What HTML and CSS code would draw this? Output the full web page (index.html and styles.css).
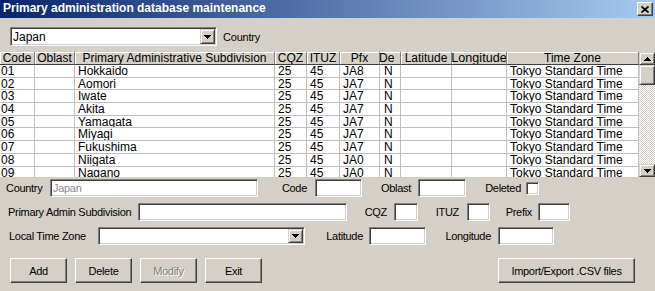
FILE: index.html
```html
<!DOCTYPE html>
<html lang="en">
<head>
    <meta charset="UTF-8">
    <title>Primary administration database maintenance</title>
    <link rel="stylesheet" href="styles.css">
</head>
<body>
    <div class="window">
        <div class="titlebar">
            <span class="title">Primary administration database maintenance</span>
            <span class="close-btn">
                <svg width="8" height="7" viewBox="0 0 8 7"><path d="M0.5 0.5l7 6M7.5 0.5l-7 6" stroke="#000" stroke-width="1.7"/></svg>
            </span>
        </div>

        <div class="country-bar">
            <div class="combo country-combo">
                <span class="combo-text">Japan</span>
                <span class="drop-btn">
                    <svg width="7" height="4" viewBox="0 0 7 4"><path d="M0 0h7v1h-1v1h-1v1h-1v1h-1v-1h-1v-1h-1v-1h-1z"/></svg>
                </span>
            </div>
            <span class="combo-label">Country</span>
        </div>

        <div class="grid-wrap">
            <div class="grid">
                <div class="grid-row grid-head">
                    <div class="hcell">Code</div>
                    <div class="hcell">Oblast</div>
                    <div class="hcell">Primary Administrative Subdivision</div>
                    <div class="hcell">CQZ</div>
                    <div class="hcell">ITUZ</div>
                    <div class="hcell">Pfx</div>
                    <div class="hcell hcell-del">De</div>
                    <div class="hcell">Latitude</div>
                    <div class="hcell hcell-lon">Longitude</div>
                    <div class="hcell">Time Zone</div>
                </div>
                <div class="grid-row">
                    <div class="cell code">01</div><div class="cell"></div><div class="cell">Hokkaido</div><div class="cell">25</div><div class="cell">45</div><div class="cell">JA8</div><div class="cell del">N</div><div class="cell"></div><div class="cell"></div><div class="cell">Tokyo Standard Time</div>
                </div>
                <div class="grid-row">
                    <div class="cell code">02</div><div class="cell"></div><div class="cell">Aomori</div><div class="cell">25</div><div class="cell">45</div><div class="cell">JA7</div><div class="cell del">N</div><div class="cell"></div><div class="cell"></div><div class="cell">Tokyo Standard Time</div>
                </div>
                <div class="grid-row">
                    <div class="cell code">03</div><div class="cell"></div><div class="cell">Iwate</div><div class="cell">25</div><div class="cell">45</div><div class="cell">JA7</div><div class="cell del">N</div><div class="cell"></div><div class="cell"></div><div class="cell">Tokyo Standard Time</div>
                </div>
                <div class="grid-row">
                    <div class="cell code">04</div><div class="cell"></div><div class="cell">Akita</div><div class="cell">25</div><div class="cell">45</div><div class="cell">JA7</div><div class="cell del">N</div><div class="cell"></div><div class="cell"></div><div class="cell">Tokyo Standard Time</div>
                </div>
                <div class="grid-row">
                    <div class="cell code">05</div><div class="cell"></div><div class="cell">Yamagata</div><div class="cell">25</div><div class="cell">45</div><div class="cell">JA7</div><div class="cell del">N</div><div class="cell"></div><div class="cell"></div><div class="cell">Tokyo Standard Time</div>
                </div>
                <div class="grid-row">
                    <div class="cell code">06</div><div class="cell"></div><div class="cell">Miyagi</div><div class="cell">25</div><div class="cell">45</div><div class="cell">JA7</div><div class="cell del">N</div><div class="cell"></div><div class="cell"></div><div class="cell">Tokyo Standard Time</div>
                </div>
                <div class="grid-row">
                    <div class="cell code">07</div><div class="cell"></div><div class="cell">Fukushima</div><div class="cell">25</div><div class="cell">45</div><div class="cell">JA7</div><div class="cell del">N</div><div class="cell"></div><div class="cell"></div><div class="cell">Tokyo Standard Time</div>
                </div>
                <div class="grid-row">
                    <div class="cell code">08</div><div class="cell"></div><div class="cell">Niigata</div><div class="cell">25</div><div class="cell">45</div><div class="cell">JA0</div><div class="cell del">N</div><div class="cell"></div><div class="cell"></div><div class="cell">Tokyo Standard Time</div>
                </div>
                <div class="grid-row">
                    <div class="cell code">09</div><div class="cell"></div><div class="cell">Nagano</div><div class="cell">25</div><div class="cell">45</div><div class="cell">JA0</div><div class="cell del">N</div><div class="cell"></div><div class="cell"></div><div class="cell">Tokyo Standard Time</div>
                </div>
            </div>

            <div class="vscroll">
                <span class="sb-btn">
                    <svg width="7" height="4" viewBox="0 0 7 4"><path d="M3 0h1v1h1v1h1v1h1v1h-7v-1h1v-1h1v-1h1z"/></svg>
                </span>
                <span class="sb-thumb"></span>
                <span class="sb-track"></span>
                <span class="sb-btn">
                    <svg width="7" height="4" viewBox="0 0 7 4"><path d="M0 0h7v1h-1v1h-1v1h-1v1h-1v-1h-1v-1h-1v-1h-1z"/></svg>
                </span>
            </div>
        </div>

        <div class="form">
            <div class="form-row row-1">
                <label class="lbl lbl-country">Country</label>
                <span class="field f-country">Japan</span>
                <label class="lbl lbl-code">Code</label>
                <span class="field f-code"></span>
                <label class="lbl lbl-oblast">Oblast</label>
                <span class="field f-oblast"></span>
                <label class="lbl lbl-deleted">Deleted</label>
                <span class="checkbox"></span>
            </div>

            <div class="form-row row-2">
                <label class="lbl lbl-pas">Primary Admin Subdivision</label>
                <span class="field f-pas"></span>
                <label class="lbl lbl-cqz">CQZ</label>
                <span class="field f-cqz"></span>
                <label class="lbl lbl-ituz">ITUZ</label>
                <span class="field f-ituz"></span>
                <label class="lbl lbl-prefix">Prefix</label>
                <span class="field f-prefix"></span>
            </div>

            <div class="form-row row-3">
                <label class="lbl lbl-tz">Local Time Zone</label>
                <div class="combo tz-combo">
                    <span class="combo-text"></span>
                    <span class="drop-btn">
                        <svg width="7" height="4" viewBox="0 0 7 4"><path d="M0 0h7v1h-1v1h-1v1h-1v1h-1v-1h-1v-1h-1v-1h-1z"/></svg>
                    </span>
                </div>
                <label class="lbl lbl-lat">Latitude</label>
                <span class="field f-lat"></span>
                <label class="lbl lbl-lon">Longitude</label>
                <span class="field f-lon"></span>
            </div>

            <div class="button-row">
                <button class="btn">Add</button>
                <button class="btn">Delete</button>
                <button class="btn btn-disabled">Modify</button>
                <button class="btn">Exit</button>
                <button class="btn btn-csv">Import/Export .CSV files</button>
            </div>
        </div>
    </div>
</body>
</html>
```

FILE: styles.css
```css
:root {
    --face: #d4d0c8;
    --shadow: #808080;
    --dark: #404040;
}

* {
    box-sizing: border-box;
    margin: 0;
    padding: 0;
}

body {
    background: var(--face);
    font-family: 'Liberation Sans', Arial, sans-serif;
    width: 655px;
    height: 291px;
    overflow: hidden;
}

.window {
    width: 655px;
    height: 291px;
}

/* title bar */
.titlebar {
    height: 18px;
    background: linear-gradient(to right, #0a246a, #a6caf0);
    display: flex;
    align-items: flex-start;
    justify-content: space-between;
    padding: 0 2px 0 3px;
}

.title {
    color: #fff;
    font-weight: bold;
    font-size: 12px;
    line-height: 16px;
    white-space: nowrap;
}

.close-btn {
    margin-top: 2px;
    width: 16px;
    height: 14px;
    background: var(--face);
    border: 1px solid;
    border-color: #fff var(--dark) var(--dark) #fff;
    box-shadow: inset -1px -1px var(--shadow);
    display: flex;
    align-items: center;
    justify-content: center;
}

/* combo boxes */
.country-bar {
    display: flex;
    align-items: center;
    padding: 9px 0 0 10px;
    margin-bottom: 6px;
}

.combo {
    display: flex;
    align-items: center;
    background: #fff;
    border: 1px solid;
    border-color: var(--shadow) #fff #fff var(--shadow);
    box-shadow: inset 1px 1px var(--dark), inset -1px -1px var(--face);
}

.country-combo {
    width: 207px;
    height: 19px;
}

.combo-text {
    flex: 1;
    font-size: 12px;
    padding-left: 2px;
    white-space: nowrap;
}

.drop-btn {
    width: 15px;
    height: 15px;
    margin: 1px;
    background: var(--face);
    border: 1px solid;
    border-color: var(--face) var(--dark) var(--dark) var(--face);
    box-shadow: inset 1px 1px #fff, inset -1px -1px var(--shadow);
    display: flex;
    align-items: center;
    justify-content: center;
}

.combo-label {
    font-size: 11px;
    letter-spacing: -0.2px;
    margin-left: 6px;
}

/* data grid */
.grid-wrap {
    display: flex;
    height: 125px;
    overflow: hidden;
}

.grid {
    width: 639px;
    background: #fff;
}

.grid-row {
    display: grid;
    grid-template-columns: 35px 40px 200px 32px 33px 40px 21px 51px 55px 132px;
}

.hcell {
    height: 13px;
    padding-top: 1px;
    background: var(--face);
    border-right: 1px solid var(--shadow);
    border-bottom: 1px solid var(--dark);
    box-shadow: inset 1px 1px #fff;
    font-size: 12px;
    line-height: 11px;
    text-align: center;
    white-space: nowrap;
    overflow: hidden;
    display: flex;
    justify-content: center;
}

.hcell-del {
    justify-content: flex-start;
    text-indent: -1px;
}

.hcell-lon {
    font-size: 12.6px;
}

.cell {
    height: 12.7px;
    border-right: 1px solid #c0c0c0;
    border-bottom: 1px solid #c0c0c0;
    font-size: 12px;
    line-height: 12px;
    padding-left: 3px;
    white-space: nowrap;
    overflow: hidden;
}

.cell.code {
    padding-left: 1px;
}

.cell.del {
    padding-left: 4px;
}

.vscroll {
    width: 16px;
    display: flex;
    flex-direction: column;
}

.sb-btn {
    height: 13px;
    background: var(--face);
    border: 1px solid;
    border-color: var(--face) var(--dark) var(--dark) var(--face);
    box-shadow: inset 1px 1px #fff, inset -1px -1px var(--shadow);
    display: flex;
    align-items: center;
    justify-content: center;
}

.sb-thumb {
    height: 20px;
    background: var(--face);
    border: 1px solid;
    border-color: var(--face) var(--dark) var(--dark) var(--face);
    box-shadow: inset 1px 1px #fff, inset -1px -1px var(--shadow);
}

.sb-track {
    flex: 1;
    background: repeating-conic-gradient(#fff 0 25%, var(--face) 0 50%) 0 0 / 2px 2px;
}

/* edit form */
.form {
    padding-top: 2px;
    font-size: 11px;
    letter-spacing: -0.3px;
}

.form-row {
    display: flex;
    align-items: center;
    height: 18px;
    margin-bottom: 6px;
}

.lbl {
    white-space: nowrap;
    line-height: 13px;
}

.field {
    height: 18px;
    background: #fff;
    border: 1px solid;
    border-color: var(--shadow) #fff #fff var(--shadow);
    box-shadow: inset 1px 1px var(--dark), inset -1px -1px var(--face);
    padding: 2px 0 0 2px;
    line-height: 13px;
    color: #8c8c8c;
    font-size: 11px;
}

.checkbox {
    width: 13px;
    height: 13px;
    background: #fff;
    border: 1px solid;
    border-color: var(--shadow) #fff #fff var(--shadow);
    box-shadow: inset 1px 1px var(--dark), inset -1px -1px var(--face);
}

/* row 1 */
.row-1 { padding-left: 6px; }
.lbl-country { width: 44px; }
.f-country { width: 208px; }
.lbl-code { width: 57px; text-align: right; padding-right: 8px; }
.f-code { width: 47px; }
.lbl-oblast { width: 56px; text-align: right; padding-right: 7px; }
.f-oblast { width: 48px; }
.lbl-deleted { width: 60px; text-align: right; padding-right: 5px; }

/* row 2 */
.row-2 { padding-left: 8px; }
.lbl-pas { width: 130px; }
.f-pas { width: 209px; }
.lbl-cqz { width: 47px; text-align: right; padding-right: 7px; }
.f-cqz { width: 24px; }
.lbl-ituz { width: 49px; text-align: right; padding-right: 8px; }
.f-ituz { width: 23px; }
.lbl-prefix { width: 48px; text-align: right; padding-right: 6px; }
.f-prefix { width: 32px; }

/* row 3 */
.row-3 { padding-left: 9px; }
.lbl-tz { width: 89px; }
.tz-combo { width: 207px; height: 18px; }
.tz-combo .drop-btn { height: 14px; }
.lbl-lat { width: 64px; text-align: right; padding-right: 6px; }
.f-lat { width: 57px; }
.lbl-lon { width: 72px; text-align: right; padding-right: 7px; }
.f-lon { width: 56px; }

/* buttons */
.button-row {
    display: flex;
    gap: 8px;
    padding: 7px 0 0 10px;
}

.btn {
    width: 57px;
    height: 25px;
    background: var(--face);
    border: 1px solid;
    border-color: #fff var(--dark) var(--dark) #fff;
    box-shadow: inset -1px -1px var(--shadow), inset 1px 1px var(--face);
    font-family: 'Liberation Sans', Arial, sans-serif;
    font-size: 11px;
    letter-spacing: -0.3px;
    color: #000;
}

.btn-disabled {
    color: var(--shadow);
    text-shadow: 1px 1px #fff;
}

.btn-csv {
    width: 137px;
    margin-left: auto;
    margin-right: 20px;
}
```
